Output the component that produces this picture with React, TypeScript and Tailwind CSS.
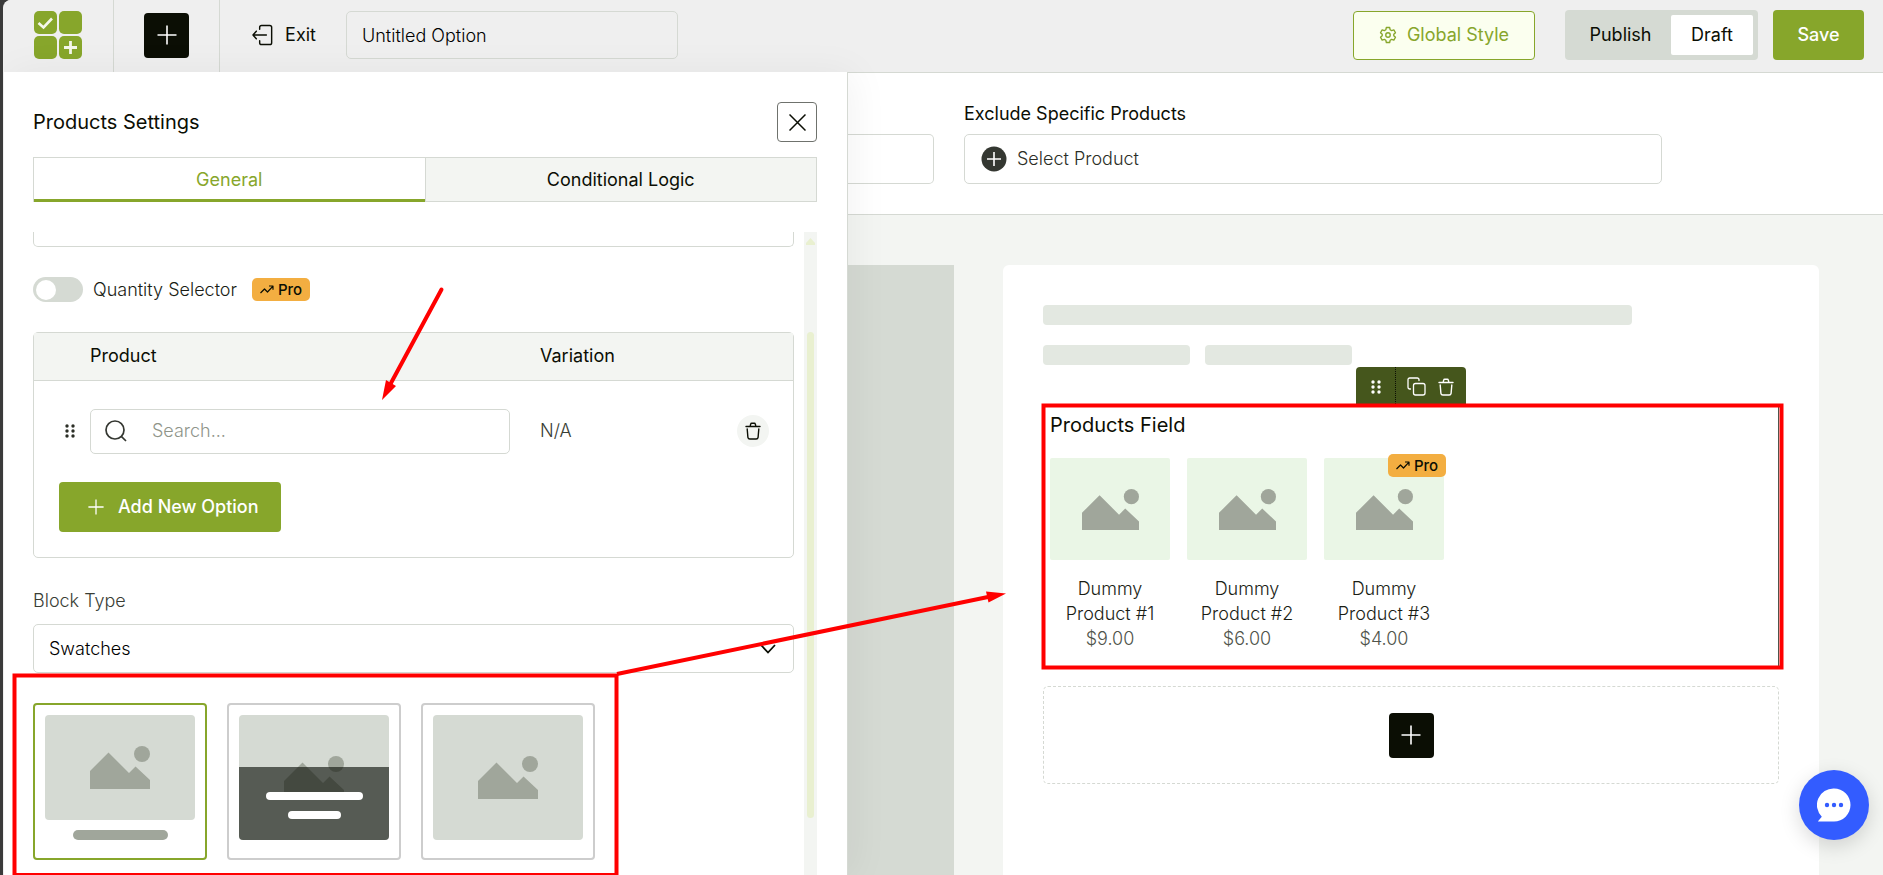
import { useState, type ReactNode } from "react";

type IconProps = { className?: string };

const Logo = () => (
    <svg width="48" height="48" viewBox="0 0 48 48" fill="none" aria-hidden="true">
        <rect width="23" height="23" rx="5" fill="#87a62b" />
        <rect x="25" width="23" height="23" rx="5" fill="#87a62b" />
        <rect y="25" width="23" height="23" rx="5" fill="#87a62b" />
        <rect x="25" y="25" width="23" height="23" rx="5" fill="#87a62b" />
        <path d="M4.5 12l5 4.5L18 7.5" stroke="#f4f7ea" strokeWidth="2.6" />
        <path d="M36.5 30v13M30 36.5h13" stroke="#f4f7ea" strokeWidth="2.8" />
    </svg>
);

const PlusIcon = ({ className }: IconProps) => (
    <svg viewBox="0 0 20 20" fill="none" stroke="currentColor" strokeWidth="1.6" className={className} aria-hidden="true">
        <path d="M10 0.5v19M0.5 10h19" />
    </svg>
);

const ExitIcon = () => (
    <svg width="22" height="22" viewBox="0 0 22 22" fill="none" stroke="currentColor" strokeWidth="1.5" strokeLinecap="round" strokeLinejoin="round" aria-hidden="true">
        <path d="M8 5V3a2 2 0 0 1 2-2h8.500a2 2 0 0 1 2 2v16a2 2 0 0 1-2 2H10a2 2 0 0 1-2-2v-2" />
        <path d="M15 11H1M4.500 7L1 11l3.500 4" />
    </svg>
);

const GearIcon = () => (
    <svg width="18" height="20" viewBox="0 0 24 24" fill="none" stroke="currentColor" strokeWidth="1.8" strokeLinejoin="round" aria-hidden="true">
        <circle cx="12" cy="12" r="3" />
        <path d="M9.800 2h4.400l.7 3 1.900 1.100 3-.9 2.200 3.800-2.300 2.100v1.800l2.300 2.100-2.200 3.800-3-.9-1.900 1.100-.7 3H9.800l-.7-3-1.900-1.100-3 .9L2 15l2.300-2.100v-1.800L2 9l2.200-3.800 3 .9L9.100 5z" />
    </svg>
);

const DotsIcon = ({ className }: IconProps) => (
    <svg width="10" height="14" viewBox="0 0 10 14" fill="currentColor" className={className} aria-hidden="true">
        {[2, 7, 12].map((y) => (
            <g key={y}>
                <circle cx="2" cy={y} r="1.7" />
                <circle cx="8" cy={y} r="1.7" />
            </g>
        ))}
    </svg>
);

const TrashIcon = () => (
    <svg width="16" height="18" viewBox="0 0 16 18" fill="none" stroke="currentColor" strokeWidth="1.4" strokeLinecap="round" strokeLinejoin="round" aria-hidden="true">
        <path d="M1 4.500h14M5.200 4.200l.5-2.200a1 1 0 0 1 1-.8h2.600a1 1 0 0 1 1 .8l.5 2.200" />
        <path d="M2.200 7l.7 8.300a2 2 0 0 0 2 1.700h6.200a2 2 0 0 0 2-1.700L13.800 7" />
    </svg>
);

const CopyIcon = () => (
    <svg width="19" height="19" viewBox="0 0 19 19" fill="none" stroke="currentColor" strokeWidth="1.3" strokeLinecap="round" aria-hidden="true">
        <rect x="6.500" y="6.500" width="11.500" height="11.500" rx="2" />
        <path d="M3.500 12H2.700A1.700 1.700 0 0 1 1 10.300V2.700A1.700 1.700 0 0 1 2.700 1h7.600A1.700 1.700 0 0 1 12 2.700v.8" />
    </svg>
);

const SearchIcon = () => (
    <svg width="22" height="22" viewBox="0 0 22 22" fill="none" stroke="currentColor" strokeWidth="1.700" aria-hidden="true">
        <circle cx="10" cy="10" r="9" />
        <path d="M16.300 16.300L21 21" />
    </svg>
);

const PictureIcon = ({ className }: IconProps) => (
    <svg viewBox="0 0 60 43" fill="#a0a69b" className={className} aria-hidden="true">
        <circle cx="52" cy="8" r="8" />
        <path d="M0 25L18.500 6.500 39 27l6.500-6.500L60 34v9H0z" />
    </svg>
);

const ProBadge = () => (
    <span className="inline-flex h-[23px] w-[58px] items-center justify-center gap-1 rounded-[5px] bg-[#f3ae41] text-[15px] leading-none font-medium text-[#0b0e04]">
        <svg width="14" height="9" viewBox="0 0 14 9" fill="none" stroke="currentColor" strokeWidth="1.200" strokeLinejoin="round" aria-hidden="true">
            <path d="M0.500 8l4-4 3 3L13 1.200M9 1h4v3.800" />
        </svg>
        Pro
    </span>
);

const AddBlockButton = ({ label }: { label: string }) => (
    <button type="button" aria-label={label} className="flex size-[45px] items-center justify-center rounded bg-[#0b0e04] text-white">
        <PlusIcon className="size-5" />
    </button>
);

const TopBar = () => {
    const [title, setTitle] = useState("Untitled Option");

    return (
        <header className="flex h-[72px] shrink-0 items-center bg-[#efefef] font-normal">
            <div className="flex h-full w-[110px] items-center border-r border-[#d5d9d3] pb-0.5 pl-[30px]">
                <Logo />
            </div>
            <div className="flex h-full w-[106px] items-center justify-center border-r border-[#d5d9d3] pb-0.5">
                <AddBlockButton label="Add block" />
            </div>
            <a href="#exit" className="ml-8 flex w-[64px] items-center gap-3 pb-0.5">
                <ExitIcon />
                Exit
            </a>
            <input
                aria-label="Option title"
                value={title}
                onChange={(e) => setTitle(e.target.value)}
                className="mb-0.5 ml-[30px] h-12 w-[332px] rounded-[5px] border border-[#d5d9d3] bg-transparent px-[15px] font-light text-black outline-none"
            />
            <div className="mr-[19px] ml-auto flex items-center pb-0.5">
                <button type="button" className="flex h-[49px] w-[182px] items-center justify-center gap-2.5 rounded border border-[#87a62b] bg-[#fbffef] text-[#87a62b]">
                    <GearIcon />
                    Global Style
                </button>
                <div className="ml-[30px] flex h-[50px] w-[193px] items-center rounded bg-[#d5dad3] p-[5px]">
                    <button type="button" className="h-full flex-1">Publish</button>
                    <button type="button" className="h-full w-[82px] rounded-xs bg-white">Draft</button>
                </div>
                <button type="button" className="ml-[15px] h-[50px] w-[91px] rounded bg-[#87a62b] font-medium text-white">
                    Save
                </button>
            </div>
        </header>
    );
};

const SwatchCard = ({ label, active, onSelect, children }: { label: string; active: boolean; onSelect: () => void; children: ReactNode }) => (
    <button
        type="button"
        aria-label={label}
        aria-pressed={active}
        onClick={onSelect}
        className={`flex h-[157px] w-[174px] flex-col items-center rounded border-2 p-2.5 ${active ? "border-[#87a62b]" : "border-[#cdcdcd]"}`}
    >
        {children}
    </button>
);

const ScrollTrack = () => (
    <div className="flex w-[13px] shrink-0 flex-col items-center bg-[#f3f5f2]" aria-hidden="true">
        <svg width="9" height="7" viewBox="0 0 9 7" fill="#e9f0d0" className="mt-1.5">
            <path d="M4.500 0L9 5v2H0V5z" />
        </svg>
        <div className="mt-[87px] h-[486px] w-[7px] rounded-full bg-[#e9f0d0]" />
    </div>
);

const SettingsPanel = () => {
    const [swatch, setSwatch] = useState(0);

    return (
        <aside className="z-10 flex w-[844px] shrink-0 flex-col border-r border-[#d5d9d3] bg-white pr-[30px] pl-[29px] shadow-[6px_0_36px_rgba(0,0,0,0.05)]">
            <div className="mt-[30px] flex items-center justify-between">
                <h2 className="text-xl font-normal">Products Settings</h2>
                <button type="button" aria-label="Close" className="flex size-10 items-center justify-center rounded border border-[#6f726d]">
                    <svg width="17" height="17" viewBox="0 0 17 17" stroke="currentColor" strokeWidth="1.500" aria-hidden="true">
                        <path d="M0.500 0.500l16 16M16.500 0.500l-16 16" />
                    </svg>
                </button>
            </div>

            <div role="tablist" className="mt-[15px] flex h-[45px] shrink-0 border border-b-0 border-[#d5d9d3] font-normal">
                <button type="button" role="tab" aria-selected="true" className="flex-1 border-b-3 border-[#87a62b] pt-[3px] text-[#87a62b]">
                    General
                </button>
                <button type="button" role="tab" aria-selected="false" className="flex-1 border-b border-l border-[#d5d9d3] bg-[#f3f5f2] pt-px">
                    Conditional Logic
                </button>
            </div>

            <div className="mt-[30px] flex min-h-0 flex-1">
                <div className="min-w-0 flex-1 overflow-hidden pr-2.5">
                    <div className="h-[15px] rounded-b-[5px] border border-t-0 border-[#d5d9d3]" />

                    <div className="mt-[30px] flex items-center">
                        <label className="flex items-center gap-2.5 text-[#1a1d15]">
                            <input type="checkbox" role="switch" className="peer sr-only" />
                            <span className="flex h-[25px] w-[50px] items-center rounded-full bg-[#d5dad3] px-[3px] peer-checked:justify-end peer-checked:bg-[#87a62b]">
                                <span className="size-5 rounded-full bg-white" />
                            </span>
                            Quantity Selector
                        </label>
                        <span className="ml-[15px] flex">
                            <ProBadge />
                        </span>
                    </div>

                    <div className="mt-[30px] rounded-[5px] border border-[#d5d9d3] pb-[25px]">
                        <table className="w-full table-fixed text-left">
                            <colgroup>
                                <col className="w-[56px]" />
                                <col className="w-[450px]" />
                                <col />
                                <col className="w-[56px]" />
                            </colgroup>
                            <thead>
                                <tr className="h-[47px] border-b border-[#d5d9d3] bg-[#f3f5f2]">
                                    <th />
                                    <th className="font-normal">Product</th>
                                    <th className="font-normal">Variation</th>
                                    <th />
                                </tr>
                            </thead>
                            <tbody>
                                <tr className="h-[102px]">
                                    <td>
                                        <DotsIcon className="ml-[31px] text-[#2b2e26]" />
                                    </td>
                                    <td>
                                        <div className="flex h-[45px] w-[420px] items-center rounded-[5px] border border-[#d5d9d3] pl-3.5 text-[#343731]">
                                            <SearchIcon />
                                            <input aria-label="Search product" placeholder="Search..." className="ml-[25px] min-w-0 flex-1 outline-none placeholder:text-[#8f958a]" />
                                        </div>
                                    </td>
                                    <td className="text-[#3a3e35]">N/A</td>
                                    <td>
                                        <button type="button" aria-label="Delete option" className="flex size-8 items-center justify-center rounded-full bg-[#f3f5f2]">
                                            <TrashIcon />
                                        </button>
                                    </td>
                                </tr>
                            </tbody>
                        </table>
                        <button type="button" className="ml-[25px] flex h-[50px] w-[222px] items-center gap-3.5 rounded bg-[#87a62b] pl-[29px] font-medium text-white">
                            <PlusIcon className="size-4" />
                            Add New Option
                        </button>
                    </div>

                    <label htmlFor="block-type" className="mt-[30px] block leading-[25px] text-[#3a3e35]">
                        Block Type
                    </label>
                    <div className="mt-[11px] grid">
                        <select id="block-type" className="col-start-1 row-start-1 h-[49px] w-full appearance-none rounded-[5px] border border-[#d5d9d3] px-[15px] text-black outline-none">
                            <option>Swatches</option>
                        </select>
                        <svg width="16" height="10" viewBox="0 0 16 10" fill="none" stroke="currentColor" strokeWidth="1.800" className="pointer-events-none col-start-1 row-start-1 mr-[18px] self-center justify-self-end" aria-hidden="true">
                            <path d="M1 1l7 7.500L15 1" />
                        </svg>
                    </div>

                    <div className="mt-[30px] flex gap-5">
                        <SwatchCard label="Label below image" active={swatch === 0} onSelect={() => setSwatch(0)}>
                            <span className="flex h-[105px] w-full items-center justify-center rounded bg-[#d5dad3]">
                                <PictureIcon className="h-[43px] w-[60px]" />
                            </span>
                            <span className="mt-2.5 h-2.5 w-[95px] rounded-full bg-[#a0a69b]" />
                        </SwatchCard>
                        <SwatchCard label="Label over image" active={swatch === 1} onSelect={() => setSwatch(1)}>
                            <span className="grid h-[125px] w-full overflow-hidden rounded bg-[#d5dad3]">
                                <PictureIcon className="col-start-1 row-start-1 h-[43px] w-[60px] place-self-center" />
                                <span className="z-10 col-start-1 row-start-1 flex h-[73px] flex-col items-center gap-[11px] self-end bg-[#13170f]/65 pt-[25px]">
                                    <span className="h-2 w-[97px] rounded-full bg-white" />
                                    <span className="h-2 w-[53px] rounded-full bg-white" />
                                </span>
                            </span>
                        </SwatchCard>
                        <SwatchCard label="Image only" active={swatch === 2} onSelect={() => setSwatch(2)}>
                            <span className="flex h-[125px] w-full items-center justify-center rounded bg-[#d5dad3]">
                                <PictureIcon className="h-[43px] w-[60px]" />
                            </span>
                        </SwatchCard>
                    </div>
                </div>
                <ScrollTrack />
            </div>
        </aside>
    );
};

const products = [
    { name: "Dummy Product #1", price: "$9.00", pro: false },
    { name: "Dummy Product #2", price: "$6.00", pro: false },
    { name: "Dummy Product #3", price: "$4.00", pro: true },
];

const ProductTile = ({ name, price, pro }: (typeof products)[number]) => (
    <li className="relative w-[120px] text-center leading-[25px]">
        <div className="flex h-[102px] items-center justify-center rounded-xs bg-[#eaf6e6]">
            <PictureIcon className="h-[41px] w-[57px]" />
        </div>
        {pro && (
            <span className="absolute -top-1 -right-0.5 flex">
                <ProBadge />
            </span>
        )}
        <p className="mt-4 px-3 text-[#1a1d15]">{name}</p>
        <p className="text-[#50544b]">{price}</p>
    </li>
);

const Canvas = () => (
    <main className="flex min-w-0 flex-1 flex-col border-t border-[#d5d9d3] bg-[#f3f5f2]">
        <section className="flex h-[142px] shrink-0 border-b border-[#d5d9d3] bg-white pt-[61px]">
            <div className="h-[50px] w-[86px] rounded-r-[5px] border border-l-0 border-[#d5d9d3]" />
            <div className="-mt-8 ml-[30px] w-[698px]">
                <p className="h-8 font-normal">Exclude Specific Products</p>
                <button type="button" className="flex h-[50px] w-full items-center gap-2.5 rounded-[5px] border border-[#d5d9d3] pl-4 text-[#2b2e26]">
                    <svg width="26" height="26" viewBox="0 0 26 26" aria-hidden="true">
                        <circle cx="13" cy="13" r="12.500" fill="#343731" />
                        <path d="M13 6v14M6 13h14" stroke="#fff" strokeWidth="1.600" />
                    </svg>
                    Select Product
                </button>
            </div>
        </section>

        <div className="flex min-h-0 flex-1 overflow-hidden pt-[50px]">
            <div className="w-[106px] shrink-0 bg-[#d5dad3]" />
            <div className="mr-16 ml-[49px] flex-1 rounded-t-md bg-white px-10 pt-10">
                <div className="h-5 w-4/5 rounded bg-[#e3e8e1]" />
                <div className="mt-5 flex gap-[15px]">
                    <div className="h-5 w-1/5 rounded bg-[#e3e8e1]" />
                    <div className="h-5 w-1/5 rounded bg-[#e3e8e1]" />
                </div>

                <div className="relative mt-10 h-[264px] border border-[#50544b] px-1.5 pt-1.5">
                    <div className="absolute right-[312px] bottom-full flex h-[39px] w-[110px] items-center rounded-t bg-[#45561c] text-white">
                        <button type="button" aria-label="Move" className="flex h-full w-10 items-center justify-center border-r border-dotted border-[#0b0e04]">
                            <DotsIcon />
                        </button>
                        <button type="button" aria-label="Duplicate" className="ml-[11px]">
                            <CopyIcon />
                        </button>
                        <button type="button" aria-label="Delete" className="ml-3">
                            <TrashIcon />
                        </button>
                    </div>
                    <h3 className="text-xl leading-[26px] font-normal">Products Field</h3>
                    <ul className="mt-5 flex gap-[17px]">
                        {products.map((p) => (
                            <ProductTile key={p.name} {...p} />
                        ))}
                    </ul>
                </div>

                <div className="mt-[17px] flex h-[98px] items-center justify-center rounded-[5px] border border-dashed border-[#d5d9d3]">
                    <AddBlockButton label="Add field" />
                </div>
            </div>
        </div>
    </main>
);

// Red boxes and arrows laid over the editor
const Annotations = () => (
    <svg className="pointer-events-none absolute top-0 left-0 z-20" width="1883" height="875" viewBox="0 0 1883 875" fill="none" stroke="#ff0000" strokeWidth="4" aria-hidden="true">
        <rect x="14.500" y="675.500" width="602" height="199.500" />
        <rect x="1043.500" y="405.500" width="738" height="262" />
        <path d="M441.500 289.500L391 383" strokeLinecap="round" />
        <path d="M617 674L988 597" />
        <path d="M382 400l4-20 10 6zM1006 593.500l-20-2 2.500 11z" fill="#ff0000" stroke="none" />
    </svg>
);

export default function App() {
    return (
        <div className="relative h-screen overflow-hidden bg-[#3a3a3a] pl-[3px] font-['Inter','Liberation_Sans',sans-serif] text-lg leading-6 font-light text-[#0b0e04]">
            <div className="flex h-full flex-col overflow-hidden rounded-tl-lg border-l border-[#efefef] bg-white">
                <TopBar />
                <div className="flex min-h-0 flex-1">
                    <SettingsPanel />
                    <Canvas />
                </div>
            </div>
            <Annotations />
            <button type="button" aria-label="Open chat" className="absolute right-3.5 bottom-[35px] flex size-[70px] items-center justify-center rounded-full bg-[#335cff] shadow-[0_6px_20px_rgba(0,0,0,0.15)]">
                <svg width="34" height="34" viewBox="0 0 34 34" aria-hidden="true">
                    <path d="M17 0.500a16.500 16.500 0 0 1 0 33H0.800l4-4.800A16.500 16.500 0 0 1 17 0.500z" fill="#fff" />
                    <g fill="#335cff">
                        <circle cx="10" cy="17" r="2.200" />
                        <circle cx="17" cy="17" r="2.200" />
                        <circle cx="24" cy="17" r="2.200" />
                    </g>
                </svg>
            </button>
        </div>
    );
}
